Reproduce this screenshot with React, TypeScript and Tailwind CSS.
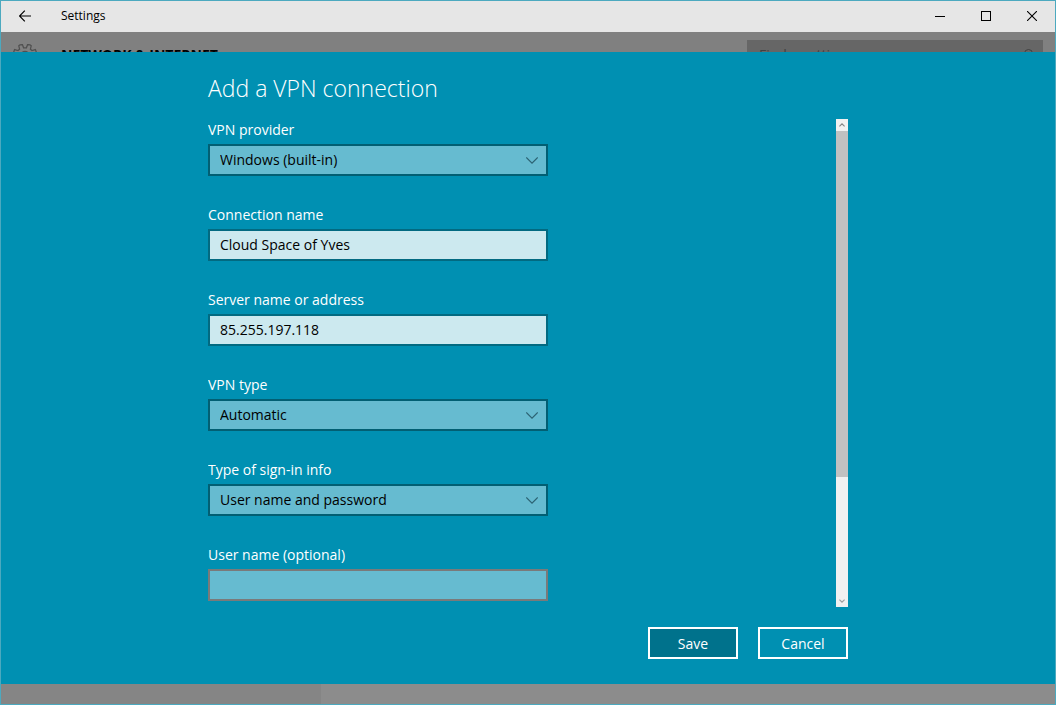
import { useId, type ReactNode } from "react";

const labelClass = "block text-[14px] leading-5 text-white";

function Field({ label, id, children }: { label: string; id: string; children: ReactNode }) {
  return (
    <div className="flex w-full max-w-[340px] flex-col gap-1">
      <label htmlFor={id} className={labelClass}>
        {label}
      </label>
      {children}
    </div>
  );
}

function SelectField({ label, options }: { label: string; options: string[] }) {
  const id = useId();
  return (
    <Field label={label} id={id}>
      <div className="relative">
        <select
          id={id}
          className="block h-8 w-full appearance-none rounded-none border-2 border-[#025f73] bg-[#66bbd0] px-2.5 text-[14px] leading-5 text-black outline-none"
        >
          {options.map((option) => (
            <option key={option}>{option}</option>
          ))}
        </select>
        <svg
          viewBox="0 0 12 7"
          className="pointer-events-none absolute top-[13px] right-[10px] h-[7px] w-3"
          fill="none"
          stroke="#2c6272"
          strokeWidth="1.1"
          aria-hidden="true"
        >
          <path d="M0.3 0.5 L6 6.2 L11.7 0.5" />
        </svg>
      </div>
    </Field>
  );
}

function TextField({ label, value }: { label: string; value: string }) {
  const id = useId();
  return (
    <Field label={label} id={id}>
      <input
        id={id}
        type="text"
        defaultValue={value}
        className={
          value
            ? "block h-8 w-full rounded-none border-2 border-[#026a81] bg-[#cce9ef] px-2.5 pb-0.5 text-[14px] leading-5 text-black outline-none"
            : "block h-8 w-full rounded-none border-2 border-[#7a7a7a] bg-[#66bbd0] px-2.5 pb-0.5 text-[14px] leading-5 text-black outline-none"
        }
      />
    </Field>
  );
}

function TitleBar() {
  return (
    <header className="flex h-[31px] shrink-0 items-center justify-between bg-[#e6e6e6] text-black">
      <div className="flex h-full items-center">
        <button type="button" aria-label="Back" className="flex h-full w-12 items-center justify-center pb-px">
          <svg viewBox="0 0 12 12" className="h-3 w-3" fill="none" stroke="currentColor" strokeWidth="1.2" aria-hidden="true">
            <path d="M0.5 6 H12 M5.8 0.7 L0.5 6 L5.8 11.3" />
          </svg>
        </button>
        <h1 className="pb-px pl-3 text-[12px] leading-4">Settings</h1>
      </div>
      <div className="flex h-full">
        <button type="button" aria-label="Minimize" className="flex h-full w-[46px] items-center justify-center pb-px">
          <svg viewBox="0 0 10 10" className="h-2.5 w-2.5" stroke="currentColor" shapeRendering="crispEdges" aria-hidden="true">
            <path d="M0 5.5 H10" />
          </svg>
        </button>
        <button type="button" aria-label="Maximize" className="flex h-full w-[46px] items-center justify-center pb-px">
          <svg viewBox="0 0 10 10" className="h-2.5 w-2.5" fill="none" stroke="currentColor" shapeRendering="crispEdges" aria-hidden="true">
            <path d="M0.5 0.5 H9.5 V9.5 H0.5 Z" />
          </svg>
        </button>
        <button type="button" aria-label="Close" className="flex h-full w-[46px] items-center justify-center pb-px">
          <svg viewBox="0 0 10 10" className="h-2.5 w-2.5" stroke="currentColor" strokeWidth="1.1" aria-hidden="true">
            <path d="M0 0 L10 10 M10 0 L0 10" />
          </svg>
        </button>
      </div>
    </header>
  );
}

function DimmedHeader() {
  return (
    <div className="flex h-5 shrink-0 items-start justify-between overflow-hidden bg-[#808080] pr-3 pl-3">
      <div className="flex items-start gap-6 pt-3">
        <svg viewBox="0 0 24 24" className="h-6 w-6" fill="none" stroke="#505050" strokeWidth="1.3" aria-hidden="true">
          <path d="M7 0.8 L9.4 0.6 L10.6 3.8 H13.4 L14.6 0.6 L17 0.8 L18.2 1.8 L17.4 5.2 L19 6.6 L22.4 5.6 L23.4 8.4 L20.8 10.6 V13.4 L23.4 15.6 L22.4 18.4 L19 17.4 L17.4 18.8 L18.2 22.2 L14.6 23.4 L13.4 20.2 H10.6 L9.4 23.4 L5.8 22.2 L6.6 18.8 L5 17.4 L1.6 18.4 L0.6 15.6 L3.2 13.4 V10.6 L0.6 8.4 L1.6 5.6 L5 6.6 L6.6 5.2 L5.8 1.8 Z" />
          <circle cx="12" cy="12" r="4.5" />
        </svg>
        <div className="text-[14px] leading-[22px] font-bold whitespace-nowrap text-black">NETWORK &amp; INTERNET</div>
      </div>
      <div className="mt-2 flex h-7 w-[296px] items-center justify-between bg-[#666666] px-2 text-[#404040]">
        <input
          type="text"
          aria-label="Find a setting"
          placeholder="Find a setting"
          className="w-full bg-transparent px-1 pt-0.5 text-[14px] leading-5 outline-none placeholder:text-[#404040]"
        />
        <svg viewBox="0 0 14 14" className="h-4 w-4 shrink-0 pt-0.5" fill="none" stroke="currentColor" aria-hidden="true">
          <circle cx="8.5" cy="5.5" r="4" />
          <path d="M5.5 8.5 L1 13" />
        </svg>
      </div>
    </div>
  );
}

function ScrollBar() {
  return (
    <div className="flex w-3 shrink-0 flex-col bg-[#f1f1f1]" aria-hidden="true">
      <div className="flex h-3 items-center justify-center">
        <svg viewBox="0 0 6 4" className="h-1 w-1.5" fill="none" stroke="#858585" strokeWidth="1.2">
          <path d="M0.4 3.4 L3 0.9 L5.6 3.4" />
        </svg>
      </div>
      <div className="flex-[173] bg-[#c1c1c1]" />
      <div className="flex-[59]" />
      <div className="flex h-3 items-center justify-center">
        <svg viewBox="0 0 6 4" className="h-1 w-1.5" fill="none" stroke="#a0a0a0" strokeWidth="1.2">
          <path d="M0.4 0.6 L3 3.1 L5.6 0.6" />
        </svg>
      </div>
    </div>
  );
}

export default function App() {
  return (
    <div className="flex h-screen flex-col border border-[#4ca9bf] font-['Open_Sans','Noto_Sans',sans-serif]">
      <TitleBar />
      <DimmedHeader />
      <main className="flex min-h-0 flex-1 flex-col bg-[#0090b2] px-6">
        <form className="mx-auto flex min-h-0 w-full max-w-[640px] flex-1 flex-col pt-5 pb-[25px]" onSubmit={(e) => e.preventDefault()}>
          <h2 className="text-[23px] leading-8 font-light text-white">Add a VPN connection</h2>
          <div className="mt-[15px] flex min-h-0 flex-1 justify-between">
            <div className="flex min-w-0 flex-1 flex-col gap-[29px] overflow-hidden pt-px">
              <SelectField label="VPN provider" options={["Windows (built-in)"]} />
              <TextField label="Connection name" value="Cloud Space of Yves" />
              <TextField label="Server name or address" value="85.255.197.118" />
              <SelectField label="VPN type" options={["Automatic"]} />
              <SelectField label="Type of sign-in info" options={["User name and password"]} />
              <TextField label="User name (optional)" value="" />
            </div>
            <ScrollBar />
          </div>
          <div className="mt-5 flex justify-end gap-5">
            <button type="submit" className="h-8 w-[90px] border-2 border-white bg-[#00728c] pt-0.5 text-[14px] leading-5 text-white">
              Save
            </button>
            <button type="button" className="h-8 w-[90px] border-2 border-white pt-0.5 text-[14px] leading-5 text-white">
              Cancel
            </button>
          </div>
        </form>
      </main>
      <div className="flex h-5 shrink-0 bg-[#8c8c8c]">
        <div className="w-80 bg-[#858585]" />
      </div>
    </div>
  );
}
